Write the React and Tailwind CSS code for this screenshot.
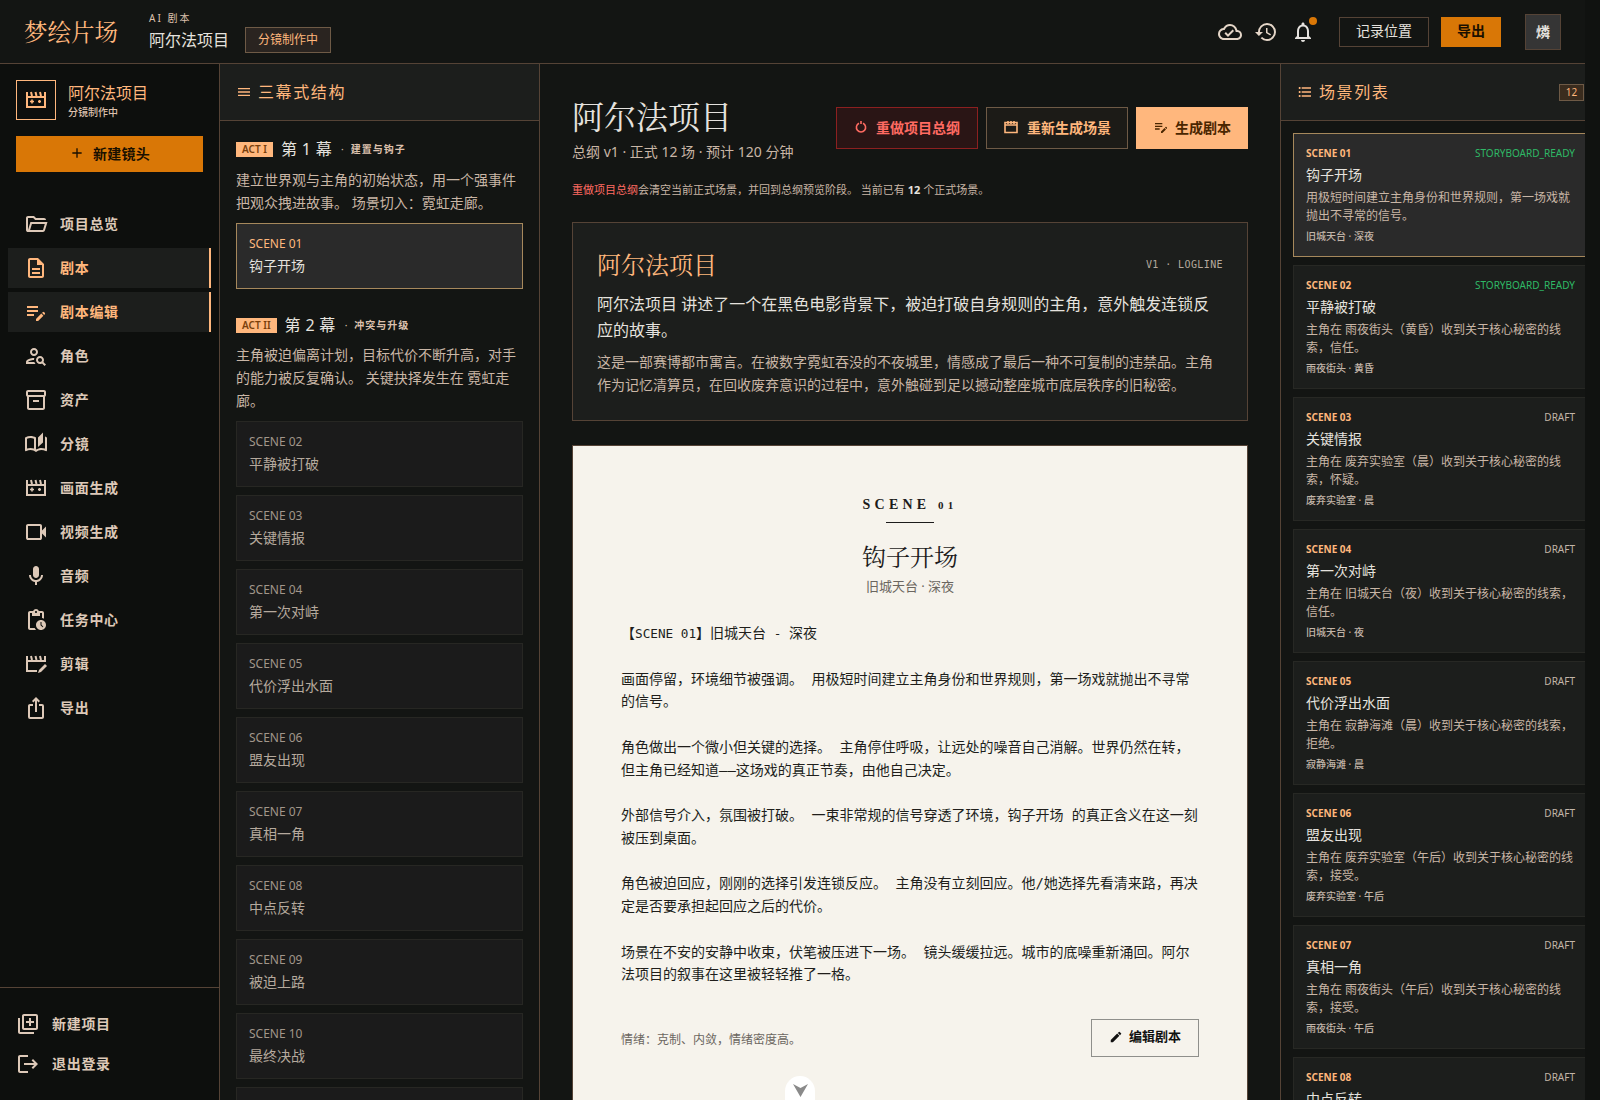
import React from "react";
import {
  MdOutlineDescription,
  MdEditNote,
  MdOutlinePersonSearch,
  MdOutlineInventory2,
  MdOutlineAutoStories,
  MdOutlineMic,
  MdOutlinePendingActions,
  MdOutlineIosShare,
  MdOutlineLibraryAdd,
  MdLogout,
  MdOutlineCloudDone,
  MdHistory,
  MdOutlineNotifications,
  MdAdd,
  MdOutlineMenu,
  MdFormatListBulleted,
  MdEdit,
} from "react-icons/md";

const sans = "font-['Noto_Sans','Noto_Sans_CJK_SC',sans-serif]";
const serif = "font-['Noto_Serif_CJK_SC','Liberation_Serif','Noto_Sans_CJK_SC',serif]";
const mono = "font-['DejaVu_Sans_Mono','Noto_Sans_CJK_SC',monospace]";

// clapper outline, with sparkles or a pencil inside
const Clapper = ({ size = 24, pencil = false, className = "" }) => (
  <svg width={size} height={size} viewBox="0 0 24 24" fill="none" className={className}>
    {pencil ? (
      <>
        <path d="M3 4v15h10M21 4v6" stroke="currentColor" strokeWidth="2" />
        <path d="M14 21l1-3 6-6 2 2-6 6z" fill="currentColor" />
      </>
    ) : (
      <>
        <path d="M3 4v15h18V4" stroke="currentColor" strokeWidth="2" />
        <path d="M8 11.5v4M6 13.5h4M15.5 12v3M14 13.5h3" stroke="currentColor" strokeWidth="1.6" />
      </>
    )}
    <path d="M3 9h18" stroke="currentColor" strokeWidth="2" />
    <path d="M7 4l1 4M11.5 4l1 4M16 4l1 4" stroke="currentColor" strokeWidth="2" />
  </svg>
);

const FolderOpen = () => (
  <svg width="24" height="24" viewBox="0 0 24 24" fill="currentColor">
    <path d="M4 20q-.825 0-1.412-.587Q2 18.825 2 18V6q0-.825.588-1.412Q3.175 4 4 4h6l2 2h8q.825 0 1.413.588Q22 7.175 22 8H11.175l-2-2H4v12l2.4-8h17.1l-2.575 8.575q-.2.65-.737 1.038Q19.65 20 19 20Zm2.1-2H19l1.8-6H7.9Z" />
  </svg>
);

const Videocam = () => (
  <svg width="24" height="24" viewBox="0 0 24 24" fill="currentColor">
    <path d="M4 20q-.825 0-1.412-.587Q2 18.825 2 18V6q0-.825.588-1.412Q3.175 4 4 4h12q.825 0 1.413.588Q18 5.175 18 6v4.5l4-4v11l-4-4V18q0 .825-.587 1.413Q16.825 20 16 20Zm0-2h12V6H4Z" />
  </svg>
);

const navItems = [
  { label: "项目总览", icon: <FolderOpen /> },
  { label: "剧本", icon: <MdOutlineDescription size={24} />, active: true },
  { label: "剧本编辑", icon: <MdEditNote size={24} />, active: true },
  { label: "角色", icon: <MdOutlinePersonSearch size={24} /> },
  { label: "资产", icon: <MdOutlineInventory2 size={24} /> },
  { label: "分镜", icon: <MdOutlineAutoStories size={24} /> },
  { label: "画面生成", icon: <Clapper /> },
  { label: "视频生成", icon: <Videocam /> },
  { label: "音频", icon: <MdOutlineMic size={24} /> },
  { label: "任务中心", icon: <MdOutlinePendingActions size={24} /> },
  { label: "剪辑", icon: <Clapper pencil /> },
  { label: "导出", icon: <MdOutlineIosShare size={24} /> },
];

const actScenes = [
  ["SCENE 02", "平静被打破"],
  ["SCENE 03", "关键情报"],
  ["SCENE 04", "第一次对峙"],
  ["SCENE 05", "代价浮出水面"],
  ["SCENE 06", "盟友出现"],
  ["SCENE 07", "真相一角"],
  ["SCENE 08", "中点反转"],
  ["SCENE 09", "被迫上路"],
  ["SCENE 10", "最终决战"],
  ["", ""],
];

const sceneList = [
  { no: "SCENE 01", title: "钩子开场", status: "STORYBOARD_READY", desc: "用极短时间建立主角身份和世界规则，第一场戏就抛出不寻常的信号。", meta: "旧城天台 · 深夜", active: true },
  { no: "SCENE 02", title: "平静被打破", status: "STORYBOARD_READY", desc: "主角在 雨夜街头（黄昏）收到关于核心秘密的线索，信任。", meta: "雨夜街头 · 黄昏" },
  { no: "SCENE 03", title: "关键情报", status: "DRAFT", desc: "主角在 废弃实验室（晨）收到关于核心秘密的线索，怀疑。", meta: "废弃实验室 · 晨" },
  { no: "SCENE 04", title: "第一次对峙", status: "DRAFT", desc: "主角在 旧城天台（夜）收到关于核心秘密的线索，信任。", meta: "旧城天台 · 夜" },
  { no: "SCENE 05", title: "代价浮出水面", status: "DRAFT", desc: "主角在 寂静海滩（晨）收到关于核心秘密的线索，拒绝。", meta: "寂静海滩 · 晨" },
  { no: "SCENE 06", title: "盟友出现", status: "DRAFT", desc: "主角在 废弃实验室（午后）收到关于核心秘密的线索，接受。", meta: "废弃实验室 · 午后" },
  { no: "SCENE 07", title: "真相一角", status: "DRAFT", desc: "主角在 雨夜街头（午后）收到关于核心秘密的线索，接受。", meta: "雨夜街头 · 午后" },
  { no: "SCENE 08", title: "中点反转", status: "DRAFT", desc: "", meta: "" },
];

const scriptBody = `画面停留，环境细节被强调。 用极短时间建立主角身份和世界规则，第一场戏就抛出不寻常的信号。

角色做出一个微小但关键的选择。 主角停住呼吸，让远处的噪音自己消解。世界仍然在转，但主角已经知道——这场戏的真正节奏，由他自己决定。

外部信号介入，氛围被打破。 一束非常规的信号穿透了环境，钩子开场 的真正含义在这一刻被压到桌面。

角色被迫回应，刚刚的选择引发连锁反应。 主角没有立刻回应。他/她选择先看清来路，再决定是否要承担起回应之后的代价。

场景在不安的安静中收束，伏笔被压进下一场。 镜头缓缓拉远。城市的底噪重新涌回。阿尔法项目的叙事在这里被轻轻推了一格。`;

const ActHead = ({ badge, title, sub }) => (
  <div className="flex items-center h-[24px]">
    <span className={`bg-[#ffb77d] text-[#7a3f0c] text-[10px] font-semibold leading-[15px] px-[6px] ${sans}`}>{badge}</span>
    <span className="text-[#e5e2de] text-[16px] leading-[24px] ml-[8px] tracking-[0.02em]">{title}</span>
    <span className="text-[#ddc1ae] text-[10px] ml-[9px]">·</span>
    <span className="text-[#ddc1ae] text-[10px] ml-[7px] tracking-[0.1em] font-semibold">{sub}</span>
  </div>
);

const SceneCard = ({ no, title, active }) => (
  <div className={`h-[66px] border px-[12px] pt-[12px] ${active ? "bg-[#2a2a2a] border-[#a6885c]" : "bg-[#1b1b1b] border-[#272723]"}`}>
    <div className={`text-[12px] leading-[16px] ${active ? "text-[#ffb77d]" : "text-[#a1968a]"}`}>{no}</div>
    <div className={`text-[14px] leading-[20px] mt-[4px] ${active ? "text-[#e5e2de]" : "text-[#b5a99d]"}`}>{title}</div>
  </div>
);

const ListCard = ({ no, title, status, desc, meta, active }) => (
  <div className={`w-[295px] h-[124px] shrink-0 border p-[12px] ${active ? "bg-[#2a2a2a] border-[#a6885c]" : "bg-[#1c1e1c] border-[#272824]"}`}>
    <div className="flex justify-between text-[10px] leading-[15px]">
      <span className="text-[#ffb77d] font-bold">{no}</span>
      <span className={status === "DRAFT" ? "text-[#c2b5a8]" : "text-[#2fb866]"}>{status}</span>
    </div>
    <div className="text-[14px] leading-[20px] mt-[4px] text-[#e5e2de]">{title}</div>
    <div className="text-[12px] leading-[18px] mt-[4px] text-[#c9b6a6]">{desc}</div>
    <div className="text-[10px] leading-[15px] mt-[4px] text-[#c2b5a8] font-medium">{meta}</div>
  </div>
);

const App = () => {
  return (
    <div className={`flex h-[1100px] w-full overflow-hidden bg-[#101210] text-[#e5e2de] ${sans}`}>
      <div className="flex flex-col w-[1585px] shrink-0 h-full">
        {/* top bar */}
        <header className="h-[64px] shrink-0 flex items-center bg-[#131513] border-b border-[#554336] pl-[24px] pr-[24px]">
          <div className={`text-[23.5px] text-[#ffb77d] w-[125px] ${serif}`}>梦绘片场</div>
          <div className="flex flex-col">
            <span className="text-[10px] leading-[14px] tracking-[0.2em] text-[#ddc1ae]">AI 剧本</span>
            <span className="text-[16px] leading-[24px] mt-[3px]">阿尔法项目</span>
          </div>
          <span className="ml-[16px] mt-[16px] h-[26px] px-[12px] flex items-center bg-[#2a2420] border border-[#6e5a46] text-[12px] text-[#ffb77d]">分镜制作中</span>
          <div className="ml-auto flex items-center">
            <MdOutlineCloudDone size={24} className="text-[#e5d6c8]" />
            <MdHistory size={24} className="ml-[12px] text-[#e5d6c8]" />
            <div className="relative ml-[13px]">
              <MdOutlineNotifications size={24} className="text-[#e5e2de]" />
              <span className="absolute -top-[3px] -right-[2px] w-[8px] h-[8px] rounded-full bg-[#d97706]" />
            </div>
            <button className="ml-[24px] w-[90px] h-[30px] pb-[2px] border border-[#554336] text-[14px] text-[#e5e2de]">记录位置</button>
            <button className="ml-[12px] w-[60px] h-[30px] pb-[2px] bg-[#d97706] text-[14px] font-semibold text-[#1a1000]">导出</button>
            <div className="ml-[24px] w-[36px] h-[36px] flex items-center justify-center bg-[#353535] border border-[#554336] text-[14px] font-bold">燐</div>
          </div>
        </header>

        <div className="flex flex-1 min-h-0">
          {/* left nav */}
          <aside className="w-[220px] shrink-0 flex flex-col bg-[#0d0f0d] border-r border-[#554336]">
            <div className="flex items-center mx-[16px] mt-[16px]">
              <div className="w-[40px] h-[40px] border border-[#ffb77d] flex items-center justify-center text-[#ffb77d]">
                <Clapper />
              </div>
              <div className="ml-[12px]">
                <div className="text-[16px] leading-[24px] text-[#ffb77d]">阿尔法项目</div>
                <div className="text-[10px] leading-[14px] text-[#ddc1ae] font-medium">分镜制作中</div>
              </div>
            </div>
            <button className="mx-[16px] mt-[16px] h-[36px] pb-[2px] bg-[#d97706] flex items-center justify-center gap-[8px] text-[14px] font-bold tracking-[0.02em] text-[#1a1000]">
              <MdAdd size={16} />
              新建镜头
            </button>
            <nav className="mt-[32px] flex flex-col gap-[4px] mx-[8px]">
              {navItems.map((item) => (
                <div
                  key={item.label}
                  className={`h-[40px] flex items-center pl-[16px] gap-[12px] text-[14px] font-bold tracking-[0.05em] ${
                    item.active ? "bg-[#1c1e1c] text-[#ffb77d] border-r-2 border-[#ffb77d]" : "text-[#ddc9b8]"
                  }`}
                >
                  <span className="w-[24px] flex justify-center">{item.icon}</span>
                  <span className="-mt-[2px]">{item.label}</span>
                </div>
              ))}
            </nav>
            <div className="mt-auto border-t border-[#554336] p-[16px]">
              <div className="h-[40px] flex items-center gap-[12px] text-[14px] font-bold tracking-[0.05em] text-[#ddc9b8]">
                <MdOutlineLibraryAdd size={24} />
                <span className="-mt-[2px]">新建项目</span>
              </div>
              <div className="h-[40px] flex items-center gap-[12px] text-[14px] font-bold tracking-[0.05em] text-[#ddc9b8]">
                <MdLogout size={24} />
                <span className="-mt-[2px]">退出登录</span>
              </div>
            </div>
          </aside>

          {/* three act structure */}
          <section className="w-[320px] shrink-0 flex flex-col bg-[#131513] border-r border-[#554336] overflow-hidden">
            <div className="h-[57px] shrink-0 flex items-center px-[16px] bg-[#1c1e1c] border-b border-[#554336] text-[#ffb77d]">
              <MdOutlineMenu size={16} />
              <span className="ml-[6px] text-[16px] tracking-[0.1em]">三幕式结构</span>
            </div>
            <div className="px-[16px] pt-[16px]">
              <ActHead badge="ACT I" title="第 1 幕" sub="建置与钩子" />
              <p className="mt-[7px] text-[14px] leading-[23px] text-[#c9b6a6]">建立世界观与主角的初始状态，用一个强事件把观众拽进故事。 场景切入：霓虹走廊。</p>
              <div className="mt-[9px]">
                <SceneCard no="SCENE 01" title="钩子开场" active />
              </div>
              <div className="mt-[24px]">
                <ActHead badge="ACT II" title="第 2 幕" sub="冲突与升级" />
              </div>
              <p className="mt-[6px] text-[14px] leading-[23px] text-[#c9b6a6]">主角被迫偏离计划，目标代价不断升高，对手的能力被反复确认。 关键抉择发生在 霓虹走廊。</p>
              <div className="mt-[9px] flex flex-col gap-[8px]">
                {actScenes.map(([no, title], i) => (
                  <SceneCard key={i} no={no} title={title} />
                ))}
              </div>
            </div>
          </section>

          {/* main */}
          <main className="flex-1 min-w-0 bg-[#131513] px-[32px] pt-[32px] overflow-hidden">
            <div className="flex justify-between items-start">
              <div>
                <h1 className={`text-[32px] leading-[38px] text-[#e5e2de] ${serif}`}>阿尔法项目</h1>
                <div className="text-[14px] leading-[20px] text-[#c9b6a6] mt-[8px]">总纲 v1 · 正式 12 场 · 预计 120 分钟</div>
              </div>
              <div className="flex gap-[8px] mt-[11px]">
                <button className="w-[142px] h-[42px] pb-[2px] flex items-center justify-center gap-[8px] bg-[#2a1515] border border-[#8c2020] text-[#ff6b62] text-[14px] font-bold">
                  <svg width="14" height="14" viewBox="0 0 14 14" fill="none" stroke="currentColor" strokeWidth="1.6"><path d="M5 3.2a4.6 4.6 0 1 0 4 0M7 1v3" /></svg>
                  重做项目总纲
                </button>
                <button className="w-[142px] h-[42px] pb-[2px] flex items-center justify-center gap-[8px] bg-[#1c1b17] border border-[#6e5a46] text-[#ffb77d] text-[14px] font-bold">
                  <svg width="16" height="16" viewBox="0 0 16 16" fill="none" stroke="currentColor" strokeWidth="1.6"><path d="M2 3.5h12v10H2zM2 6h12M5 2v3M8 2v3M11 2v3" /></svg>
                  重新生成场景
                </button>
                <button className="w-[112px] h-[42px] pb-[2px] flex items-center justify-center gap-[6px] bg-[#ffb77d] text-[#4a2600] text-[14px] font-bold">
                  <MdEditNote size={16} />
                  生成剧本
                </button>
              </div>
            </div>
            <p className="mt-[20px] text-[11px] leading-[16px] text-[#c9b6a6]">
              <span className="text-[#ff6b62]">重做项目总纲</span>会清空当前正式场景，并回到总纲预览阶段。 当前已有 <b className="text-[#e5e2de]">12</b> 个正式场景。
            </p>

            <div className="mt-[24px] h-[199px] border border-[#554336] bg-[#1c1e1c] px-[24px] pt-[25px]">
              <div className="flex justify-between items-center">
                <h2 className={`text-[24px] leading-[32px] text-[#ffb77d] ${serif}`}>阿尔法项目</h2>
                <span className={`text-[10px] tracking-[0.04em] text-[#b5a99d] ${mono}`}>V1 · LOGLINE</span>
              </div>
              <p className="mt-[11px] text-[16px] leading-[26px] text-[#e5e2de]">阿尔法项目 讲述了一个在黑色电影背景下，被迫打破自身规则的主角，意外触发连锁反应的故事。</p>
              <p className="mt-[7px] text-[14px] leading-[23px] text-[#c9b6a6]">这是一部赛博都市寓言。在被数字霓虹吞没的不夜城里，情感成了最后一种不可复制的违禁品。主角作为记忆清算员，在回收废弃意识的过程中，意外触碰到足以撼动整座城市底层秩序的旧秘密。</p>
            </div>

            <article className="relative mt-[24px] h-[700px] bg-[#f6f3ec] border border-[#554336] px-[48px] pt-[50px] text-[#1c1b1b]">
              <div className="text-center">
                <div className="text-[14px] leading-[18px] font-bold tracking-[0.3em] font-['Liberation_Serif',serif]">
                  SCENE <span className="text-[11px]">01</span>
                </div>
                <div className="w-[48px] h-px bg-[#1c1b1b] mx-auto mt-[8px]" />
                <div className={`text-[24px] leading-[32px] mt-[17px] ${serif}`}>钩子开场</div>
                <div className="text-[13px] leading-[16px] mt-[6px] text-[#6b6660]">旧城天台 · 深夜</div>
              </div>
              <div className={`mt-[28px] text-[14px] leading-[22.75px] whitespace-pre-wrap text-[#201e1b] ${mono}`}>
                <div className="h-[45.5px]">
                  【<span className="text-[12.7px]">SCENE 01</span>】旧城天台<span className="text-[12.7px]"> - </span>深夜
                </div>
                {scriptBody}
              </div>
              <div className="flex items-center justify-between mt-[33px]">
                <span className="text-[12px] mt-[3px] text-[#6b6660]">情绪：克制、内敛，情绪密度高。</span>
                <button className="w-[108px] h-[38px] pb-[2px] flex items-center justify-center gap-[6px] border border-[#8f8f8b] text-[13px] font-bold text-[#111]">
                  <MdEdit size={14} />
                  编辑剧本
                </button>
              </div>
              <div className="absolute left-[212px] top-[630px] w-[30px] h-[60px] rounded-full bg-white flex justify-center pt-[7px]">
                <svg width="15" height="14" viewBox="0 0 15 14" fill="#8a8a8a"><path d="M0 1l7.5 4L15 1l-7.5 13z" /></svg>
              </div>
            </article>
          </main>

          {/* scene list */}
          <section className="w-[305px] shrink-0 flex flex-col bg-[#131513] border-l border-[#554336] overflow-hidden">
            <div className="h-[57px] shrink-0 flex items-center pl-[16px] bg-[#1c1e1c] border-b border-[#554336] text-[#ffb77d]">
              <MdFormatListBulleted size={16} />
              <span className="ml-[6px] text-[16px] tracking-[0.1em]">场景列表</span>
              <span className="ml-auto mr-[1px] w-[25px] h-[17px] flex items-center justify-center bg-[#3a2c1e] border border-[#6e5a46] text-[10px]">12</span>
            </div>
            <div className="pl-[12px] pt-[12px] flex flex-col gap-[8px] overflow-hidden">
              {sceneList.map((s) => (
                <ListCard key={s.no} {...s} />
              ))}
            </div>
          </section>
        </div>
      </div>
      <div className="w-[15px] shrink-0 bg-[#101210]" />
    </div>
  );
};

export default App;
